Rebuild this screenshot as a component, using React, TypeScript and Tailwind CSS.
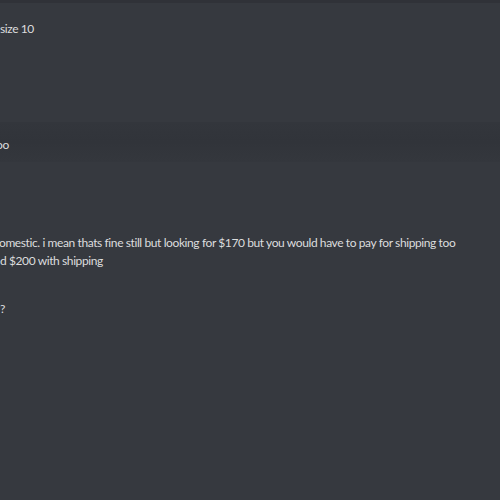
const lineCls = "text-[12px] leading-[18px] tracking-[-0.4px] text-[#dcddde] whitespace-nowrap";

export default function App() {
  return (
    <div
      className="w-[500px] h-[500px] overflow-hidden bg-[#36393f] flex flex-col"
      style={{ fontFamily: 'Lato, "Noto Sans", sans-serif' }}
    >
      <div className="h-[3px] bg-[#303238]" />
      <div className="pt-[17px] h-[119px]">
        <p className={lineCls}>size 10</p>
      </div>
      <div className="bg-gradient-to-b from-[#33363c] via-[#31343a] to-[#34373d] h-[40px] pt-[14px]">
        <p className={`${lineCls} -ml-[4px]`}>oo</p>
      </div>
      <div className="pt-[72px]">
        <p className={`${lineCls} -ml-[1px]`}>
          omestic. i mean thats fine still but looking for $170 but you would have to pay for shipping too
        </p>
        <p className={lineCls}>d $200 with shipping</p>
        <p className={`${lineCls} mt-[30px]`}>?</p>
      </div>
    </div>
  );
}
